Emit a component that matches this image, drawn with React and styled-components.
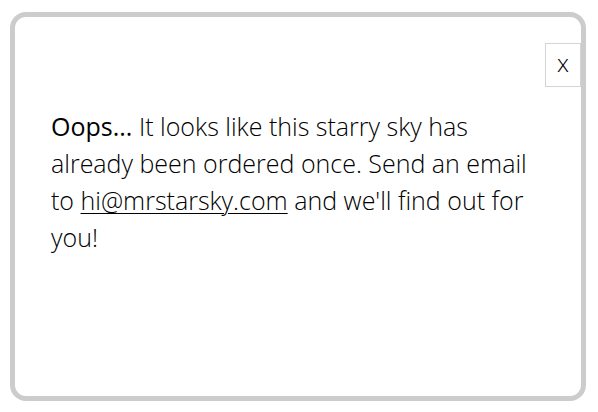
import React from 'react';
import styled, { createGlobalStyle } from 'styled-components';

const GlobalStyle = createGlobalStyle`
  html, body {
    margin: 0;
    padding: 0;
    background: #fff;
  }
  body {
    font-family: 'Open Sans', 'Liberation Sans', sans-serif;
  }
`;

const Page = styled.div`
  width: 598px;
  height: 412px;
  box-sizing: border-box;
  padding: 12px 12px 11px 10px;
`;

const Modal = styled.div`
  box-sizing: border-box;
  height: 389px;
  border: 5px solid #cccccc;
  border-radius: 16px;
  background: #fff;
  display: flex;
  flex-direction: column;
`;

const Header = styled.div`
  display: flex;
  justify-content: flex-end;
  padding-top: 26px;
`;

const CloseButton = styled.button`
  width: 36px;
  height: 44px;
  box-sizing: border-box;
  border: 1px solid #d4d4d4;
  background: #fff;
  color: #000;
  font-family: 'Open Sans', 'Liberation Sans', sans-serif;
  font-weight: 300;
  font-size: 24px;
  line-height: 1;
  padding: 0 0 4px;
  cursor: pointer;
`;

const Message = styled.p`
  margin: 21px 36px 0;
  font-size: 25px;
  font-weight: 300;
  line-height: 37px;
  color: #000;
`;

const Lead = styled.span`
  font-weight: 400;
`;

const Email = styled.a`
  color: inherit;
  text-decoration: underline;
  text-underline-offset: 3px;
  text-decoration-thickness: 1px;
`;

export default function App() {
  return (
    <>
      <GlobalStyle />
      <Page>
        <Modal>
          <Header>
            <CloseButton>x</CloseButton>
          </Header>
          <Message>
            <Lead>Oops...</Lead> It looks like this starry sky has already been ordered once. Send an email to{' '}
            <Email href="mailto:hi@mrstarsky.com">hi@mrstarsky.com</Email> and we'll find out for you!
          </Message>
        </Modal>
      </Page>
    </>
  );
}
